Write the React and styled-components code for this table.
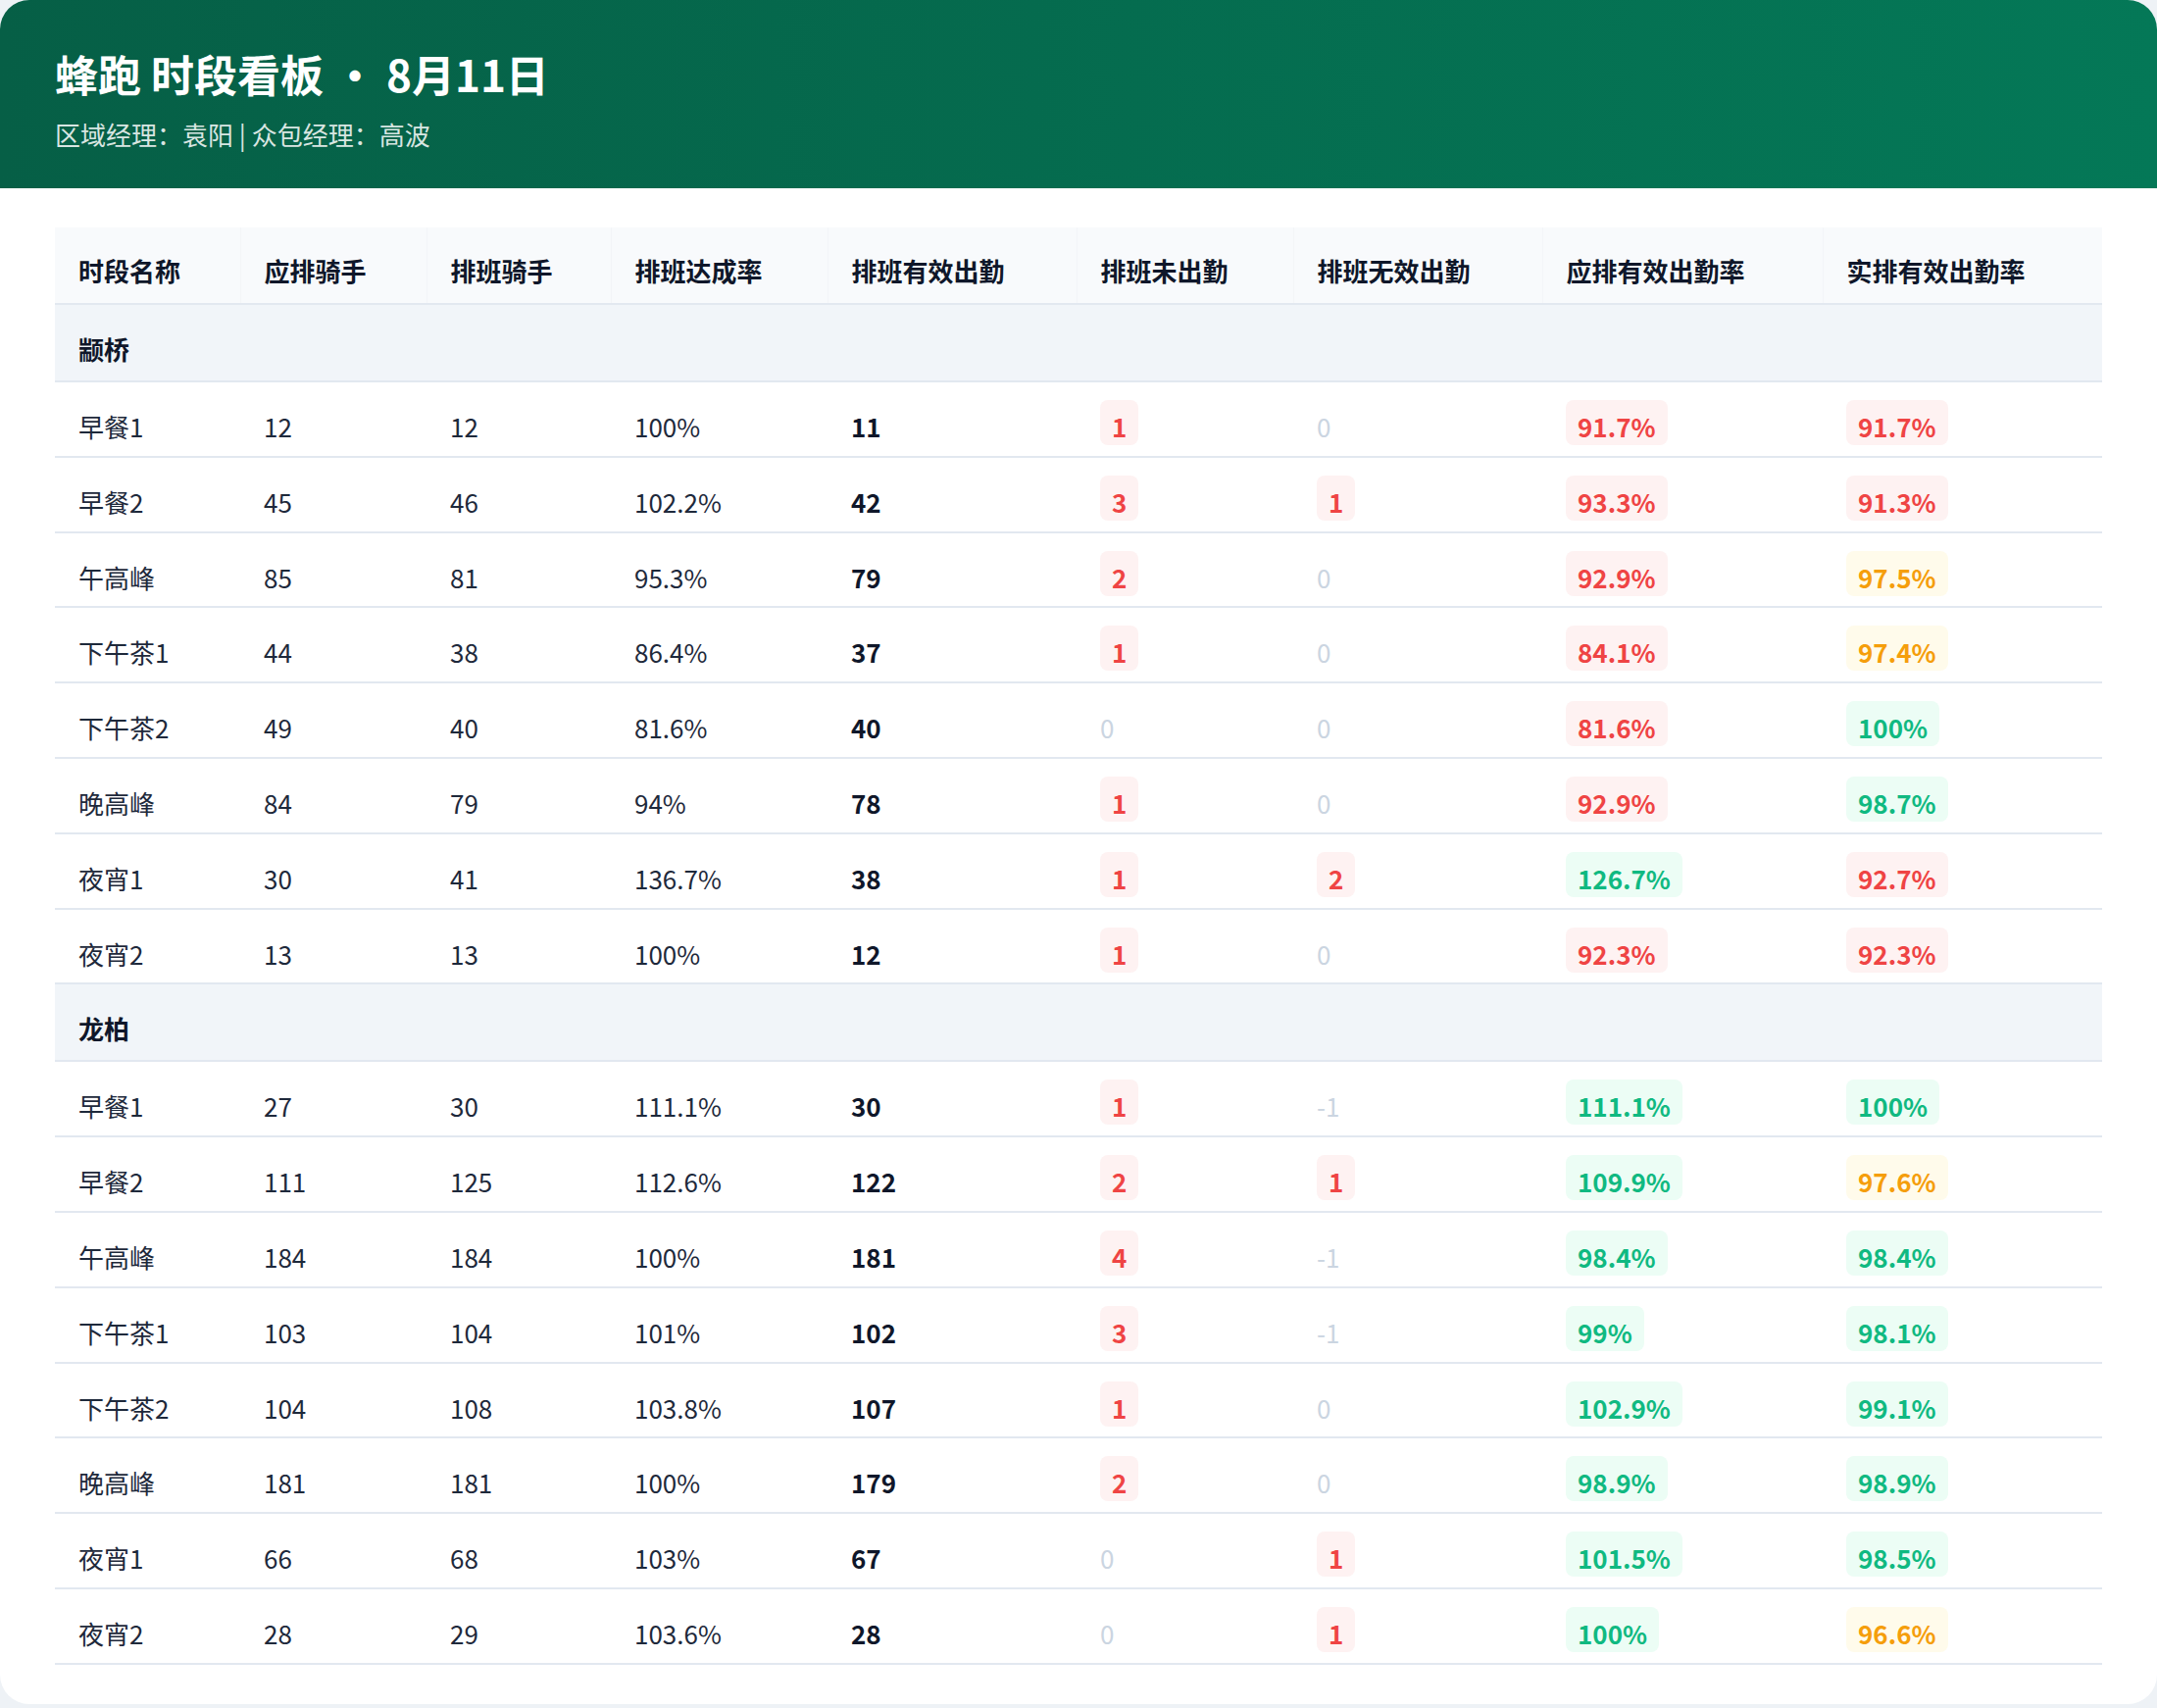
import React from 'react';
import styled, { createGlobalStyle } from 'styled-components';

const GlobalStyle = createGlobalStyle`
  html, body {
    margin: 0;
    padding: 0;
    background: #eef2f6;
  }
  body {
    font-family: "Noto Sans CJK SC", "Noto Sans", sans-serif;
    color: #1e293b;
  }
`;

const Board = styled.div`
  width: 2200px;
  background: #ffffff;
  border-radius: 30px;
  overflow: hidden;
  padding-bottom: 40px;
`;

const Header = styled.header`
  background: linear-gradient(90deg, #065f46 0%, #047857 100%);
  padding: 48px 56px 37px;
  color: #ffffff;
`;

const Title = styled.h1`
  margin: 0;
  font-size: 44px;
  line-height: 54px;
  font-weight: 700;
`;

const Subtitle = styled.div`
  margin-top: 17px;
  font-size: 26px;
  line-height: 36px;
  color: rgba(255, 255, 255, 0.86);
`;

const TableWrap = styled.div`
  padding: 40px 56px 0;
`;

const Table = styled.table`
  width: 2088px;
  table-layout: fixed;
  border-collapse: collapse;
  font-size: 26px;
  line-height: 36px;
`;

const Th = styled.th`
  text-align: left;
  font-weight: 700;
  color: #0f172a;
  background: #f8fafc;
  padding: 26px 24px 15px;
  border-bottom: 2px solid #e2e8f0;
  border-right: 1px solid #f3f5f8;
  white-space: nowrap;
  &:last-child {
    border-right: none;
  }
`;

const GroupCell = styled.td`
  background: #f1f5f9;
  font-weight: 700;
  color: #0f172a;
  padding: 27px 24px 14px;
  border-bottom: 2px solid #e2e8f0;
`;

const Td = styled.td`
  vertical-align: baseline;
  padding: 18px 24px 10.8px;
  border-bottom: 2px solid #e2e8f0;
  white-space: nowrap;
  font-weight: ${p => (p.$bold ? 700 : 400)};
  color: ${p => (p.$muted ? '#cbd5e1' : p.$bold ? '#0f172a' : '#1e293b')};
`;

const tones = {
  red: { fg: '#ef4444', bg: '#fef2f2' },
  amber: { fg: '#f59e0b', bg: '#fffbeb' },
  green: { fg: '#10b981', bg: '#ecfdf5' },
};

const Badge = styled.span`
  display: inline-block;
  padding: 9px 12px 1px;
  border-radius: 8px;
  font-weight: 700;
  color: ${p => tones[p.$tone].fg};
  background: ${p => tones[p.$tone].bg};
`;

const columns = [
  { title: '时段名称', width: 189 },
  { title: '应排骑手', width: 190 },
  { title: '排班骑手', width: 188 },
  { title: '排班达成率', width: 221 },
  { title: '排班有效出勤', width: 254 },
  { title: '排班未出勤', width: 221 },
  { title: '排班无效出勤', width: 254 },
  { title: '应排有效出勤率', width: 286 },
  { title: '实排有效出勤率', width: 285 },
];

const groups = [
  {
    name: '颛桥',
    rows: [
      ['早餐1', 12, 12, '100%', 11, 1, 0, '91.7%', '91.7%'],
      ['早餐2', 45, 46, '102.2%', 42, 3, 1, '93.3%', '91.3%'],
      ['午高峰', 85, 81, '95.3%', 79, 2, 0, '92.9%', '97.5%'],
      ['下午茶1', 44, 38, '86.4%', 37, 1, 0, '84.1%', '97.4%'],
      ['下午茶2', 49, 40, '81.6%', 40, 0, 0, '81.6%', '100%'],
      ['晚高峰', 84, 79, '94%', 78, 1, 0, '92.9%', '98.7%'],
      ['夜宵1', 30, 41, '136.7%', 38, 1, 2, '126.7%', '92.7%'],
      ['夜宵2', 13, 13, '100%', 12, 1, 0, '92.3%', '92.3%'],
    ],
  },
  {
    name: '龙柏',
    rows: [
      ['早餐1', 27, 30, '111.1%', 30, 1, -1, '111.1%', '100%'],
      ['早餐2', 111, 125, '112.6%', 122, 2, 1, '109.9%', '97.6%'],
      ['午高峰', 184, 184, '100%', 181, 4, -1, '98.4%', '98.4%'],
      ['下午茶1', 103, 104, '101%', 102, 3, -1, '99%', '98.1%'],
      ['下午茶2', 104, 108, '103.8%', 107, 1, 0, '102.9%', '99.1%'],
      ['晚高峰', 181, 181, '100%', 179, 2, 0, '98.9%', '98.9%'],
      ['夜宵1', 66, 68, '103%', 67, 0, 1, '101.5%', '98.5%'],
      ['夜宵2', 28, 29, '103.6%', 28, 0, 1, '100%', '96.6%'],
    ],
  },
];

const rateTone = value => {
  const n = parseFloat(value);
  if (n >= 98) return 'green';
  if (n >= 95) return 'amber';
  return 'red';
};

const CountCell = ({ value }) =>
  value > 0 ? (
    <Td>
      <Badge $tone="red">{value}</Badge>
    </Td>
  ) : (
    <Td $muted>{value}</Td>
  );

const RateCell = ({ value }) => (
  <Td>
    <Badge $tone={rateTone(value)}>{value}</Badge>
  </Td>
);

const App = () => (
  <>
    <GlobalStyle />
    <Board>
      <Header>
        <Title>蜂跑 时段看板 · 8月11日</Title>
        <Subtitle>区域经理：袁阳 | 众包经理：高波</Subtitle>
      </Header>
      <TableWrap>
        <Table>
          <colgroup>
            {columns.map(c => (
              <col key={c.title} style={{ width: c.width }} />
            ))}
          </colgroup>
          <thead>
            <tr>
              {columns.map(c => (
                <Th key={c.title}>{c.title}</Th>
              ))}
            </tr>
          </thead>
          <tbody>
            {groups.map(g => (
              <React.Fragment key={g.name}>
                <tr>
                  <GroupCell colSpan={columns.length}>{g.name}</GroupCell>
                </tr>
                {g.rows.map(r => (
                  <tr key={`${g.name}-${r[0]}`}>
                    <Td>{r[0]}</Td>
                    <Td>{r[1]}</Td>
                    <Td>{r[2]}</Td>
                    <Td>{r[3]}</Td>
                    <Td $bold>{r[4]}</Td>
                    <CountCell value={r[5]} />
                    <CountCell value={r[6]} />
                    <RateCell value={r[7]} />
                    <RateCell value={r[8]} />
                  </tr>
                ))}
              </React.Fragment>
            ))}
          </tbody>
        </Table>
      </TableWrap>
    </Board>
  </>
);

export default App;
